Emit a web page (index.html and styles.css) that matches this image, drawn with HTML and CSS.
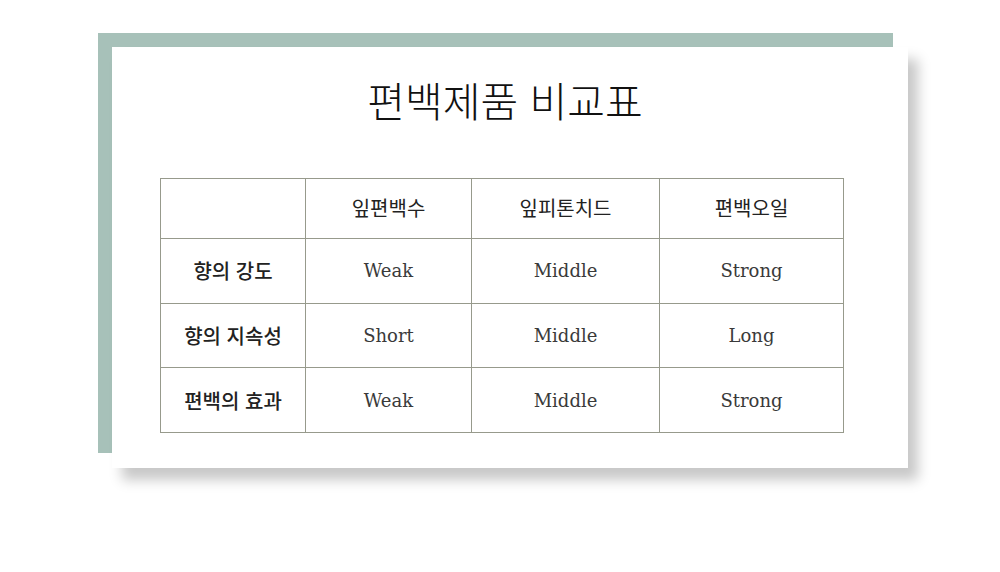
FILE: index.html
```html
<!DOCTYPE html>
<html lang="ko">
<head>
<meta charset="utf-8">
<link rel="stylesheet" href="styles.css">
</head>
<body>
<div class="stage">
  <div class="frame">
    <div class="card">
      <h1 class="title">편백제품 비교표</h1>
      <table class="cmp">
        <tr class="head">
          <th class="c1"></th>
          <th class="c2">잎편백수</th>
          <th class="c3">잎피톤치드</th>
          <th class="c4">편백오일</th>
        </tr>
        <tr>
          <th class="label">향의 강도</th>
          <td>Weak</td>
          <td>Middle</td>
          <td>Strong</td>
        </tr>
        <tr>
          <th class="label">향의 지속성</th>
          <td>Short</td>
          <td>Middle</td>
          <td>Long</td>
        </tr>
        <tr>
          <th class="label">편백의 효과</th>
          <td>Weak</td>
          <td>Middle</td>
          <td>Strong</td>
        </tr>
      </table>
    </div>
  </div>
</div>
</body>
</html>
```

FILE: styles.css
```css
html, body {
  margin: 0;
  padding: 0;
  background: #ffffff;
}
body {
  width: 1000px;
  height: 572px;
  overflow: hidden;
  font-family: "Noto Sans CJK KR", "Noto Sans", sans-serif;
  color: #222;
}
.stage {
  padding: 33px 0 0 98px;
}
.frame {
  box-sizing: border-box;
  width: 795px;
  height: 420px;
  background: #a7c1b9;
  padding: 14px 0 0 14px;
}
.card {
  box-sizing: border-box;
  width: 796px;
  height: 421px;
  background: #ffffff;
  box-shadow: 10px 12px 12px rgba(0, 0, 0, 0.22);
  padding: 0 0 0 48px;
  display: flex;
  flex-direction: column;
}
.title {
  width: 690px;
  margin: 25px 0 0 0;
  height: 106px;
  text-align: center;
  font-family: "Noto Sans CJK KR", sans-serif;
  font-weight: 300;
  font-size: 41px;
  line-height: 54px;
  color: #111;
}
.cmp {
  width: 684px;
  border-collapse: collapse;
  table-layout: fixed;
}
.cmp th, .cmp td {
  border: 1px solid #979a8c;
  text-align: center;
  padding: 0;
}
.cmp .c1 { width: 144px; }
.cmp .c2 { width: 165px; }
.cmp .c3 { width: 187px; }
.cmp .c4 { width: 183px; }
.head th {
  height: 57px;
  font-family: "Noto Sans CJK KR", sans-serif;
  font-weight: 400;
  font-size: 20px;
  color: #222;
  padding-bottom: 2px;
}
.cmp tr:not(.head) th, .cmp tr:not(.head) td {
  height: 63.67px;
}
.label {
  font-family: "Noto Sans CJK KR", sans-serif;
  font-weight: 500;
  font-size: 20px;
  color: #222;
}
.cmp td {
  font-family: "DejaVu Serif", "Liberation Serif", serif;
  font-weight: 300;
  font-size: 18px;
  color: #3a3a3a;
}
```
